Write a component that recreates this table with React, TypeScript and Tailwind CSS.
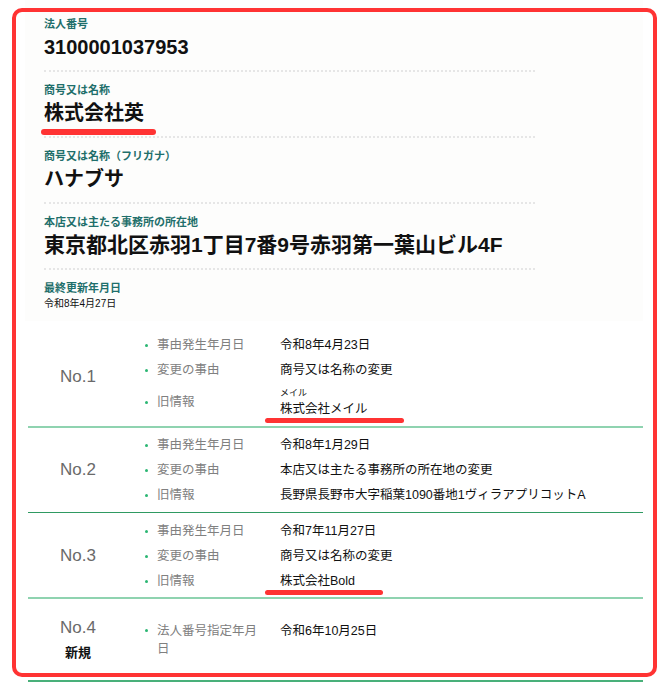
import React from "react";

type Field = { label: string; value: string; mark?: boolean; big?: boolean };

type Item = {
  label: string;
  value: string;
  ruby?: string;
  mark?: string;
};

type Row = {
  no: string;
  isNew?: boolean;
  items: Item[];
  rowClass: string;
};

const fields: Field[] = [
  { label: "法人番号", value: "3100001037953" },
  { label: "商号又は名称", value: "株式会社英", mark: true },
  { label: "商号又は名称（フリガナ）", value: "ハナブサ" },
  {
    label: "本店又は主たる事務所の所在地",
    value: "東京都北区赤羽1丁目7番9号赤羽第一葉山ビル4F",
    big: true,
  },
];

const rows: Row[] = [
  {
    no: "No.1",
    rowClass: "pt-[8px] pb-[8px] border-b-2 border-[#8fd3b0]",
    items: [
      { label: "事由発生年月日", value: "令和8年4月23日" },
      { label: "変更の事由", value: "商号又は名称の変更" },
      { label: "旧情報", value: "株式会社メイル", ruby: "メイル", mark: "w-[139px]" },
    ],
  },
  {
    no: "No.2",
    rowClass: "pt-[8px] pb-[8px] border-b border-[#2f9a62]",
    items: [
      { label: "事由発生年月日", value: "令和8年1月29日" },
      { label: "変更の事由", value: "本店又は主たる事務所の所在地の変更" },
      { label: "旧情報", value: "長野県長野市大字稲葉1090番地1ヴィラアプリコットA" },
    ],
  },
  {
    no: "No.3",
    rowClass: "pt-[9px] pb-[7px] border-b-2 border-[#8fd3b0]",
    items: [
      { label: "事由発生年月日", value: "令和7年11月27日" },
      { label: "変更の事由", value: "商号又は名称の変更" },
      { label: "旧情報", value: "株式会社Bold", mark: "w-[118px]" },
    ],
  },
  {
    no: "No.4",
    isNew: true,
    rowClass: "pt-[17px] pb-[17px] border-b-2 border-[#49b07a]",
    items: [{ label: "法人番号指定年月日", value: "令和6年10月25日" }],
  },
];

function HistoryItem({ item }: { item: Item }) {
  const center = item.ruby ? "self-center" : "";
  return (
    <li className="flex items-start">
      <span className={`w-[12px] h-[18px] flex items-center shrink-0 ${center}`}>
        <span className="block w-[3px] h-[3px] rounded-full bg-[#2bb673]" />
      </span>
      <span
        className={`w-[108px] mr-[15px] shrink-0 text-[12.5px] leading-[18px] text-[#808080] ${center}`}
      >
        {item.label}
      </span>
      <div className="text-[12.5px] text-[#111]">
        {item.ruby && <div className="text-[9px] leading-[14px]">{item.ruby}</div>}
        <div className="relative leading-[18px]">
          {item.value}
          {item.mark && (
            <span
              className={`absolute left-[-15px] top-[18px] h-[5px] rounded-full bg-[#ff3333] ${item.mark}`}
            />
          )}
        </div>
      </div>
    </li>
  );
}

export default function App() {
  return (
    <div className="relative w-[669px] h-[690px] overflow-hidden bg-white font-['Liberation_Sans','Noto_Sans_CJK_JP',sans-serif]">
      {/* Registered details */}
      <div className="ml-[25px] w-[618px] bg-[#fdfdfc] pl-[19px] pt-[17px] pb-[10px]">
        <div className="w-[491px]">
          {fields.map((f, i) => (
            <div
              key={f.label}
              className={`pb-[9px] border-b-2 border-dotted border-[#e6e6e6] ${i > 0 ? "pt-[11px]" : ""}`}
            >
              <div className="text-[11px] leading-[14px] font-bold text-[#1f6f6b]">
                {f.label}
              </div>
              <div
                className={`mt-[2px] leading-[28px] font-bold text-[#111] ${f.big ? "text-[21px]" : "text-[20px]"}`}
              >
                <span className="relative inline-block">
                  {f.value}
                  {f.mark && (
                    <span className="absolute left-[-3px] top-[30px] w-[115px] h-[6px] rounded-full bg-[#ff3333]" />
                  )}
                </span>
              </div>
            </div>
          ))}
          <div className="pt-[11px]">
            <div className="text-[11px] leading-[14px] font-bold text-[#1f6f6b]">最終更新年月日</div>
            <div className="mt-[2px] text-[10px] leading-[14px] text-[#111]">令和8年4月27日</div>
          </div>
        </div>
      </div>

      {/* Change history */}
      <div className="mt-[7px] ml-[28px] w-[615px]">
        {rows.map((r) => (
          <div key={r.no} className={`flex items-center ${r.rowClass}`}>
            <div className="w-[100px] shrink-0 flex flex-col items-center">
              <span className="text-[17px] leading-[24px] text-[#6a6a6a]">{r.no}</span>
              {r.isNew && (
                <span className="mt-[3px] text-[13px] leading-[20px] font-bold text-[#111]">新規</span>
              )}
            </div>
            <ul className="ml-[17px] flex flex-col gap-[7px]">
              {r.items.map((it) => (
                <HistoryItem key={it.label} item={it} />
              ))}
            </ul>
          </div>
        ))}
      </div>

      {/* Annotation frame */}
      <div className="pointer-events-none absolute left-[12px] top-[8px] w-[645px] h-[669px] rounded-[10px] border-4 border-[#ff3333]" />
    </div>
  );
}
